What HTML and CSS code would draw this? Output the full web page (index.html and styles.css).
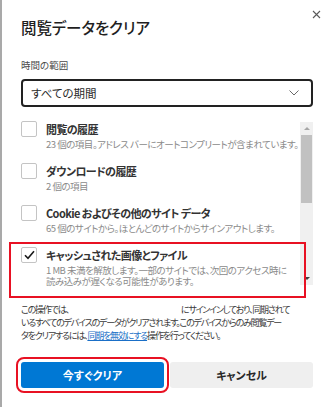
FILE: index.html
```html
<!DOCTYPE html>
<html lang="ja">
<head>
<meta charset="utf-8">
<title>閲覧データをクリア</title>
<link rel="stylesheet" href="styles.css">
</head>
<body>
<div class="frame">
  <div class="edge"></div>
  <div class="dialog">
    <div class="header">
      <h1 class="title">閲覧データをクリア</h1>
      <button class="close" aria-label="閉じる">
        <svg width="9" height="9" viewBox="0 0 9 9"><path d="M1 1L8 8M8 1L1 8" stroke="#5a5a5a" stroke-width="1.1" fill="none"/></svg>
      </button>
    </div>
    <div class="range-label">時間の範囲</div>
    <div class="select">
      <span class="select-value">すべての期間</span>
      <svg class="chevron" width="10" height="6" viewBox="0 0 10 6"><path d="M0.5 0.5L5 5L9.5 0.5" stroke="#6a6a6a" stroke-width="1" fill="none"/></svg>
    </div>
    <div class="list">
      <div class="items">
        <div class="item">
          <span class="cb"></span>
          <div class="text">
            <div class="label">閲覧の履歴</div>
            <div class="desc">23 個の項目。アドレス バーにオートコンプリートが含まれています。</div>
          </div>
        </div>
        <div class="item">
          <span class="cb"></span>
          <div class="text">
            <div class="label">ダウンロードの履歴</div>
            <div class="desc">2 個の項目</div>
          </div>
        </div>
        <div class="item">
          <span class="cb"></span>
          <div class="text">
            <div class="label">Cookie およびその他のサイト データ</div>
            <div class="desc">65 個のサイトから。ほとんどのサイトからサインアウトします。</div>
          </div>
        </div>
        <div class="item highlighted">
          <span class="cb checked">
            <svg width="16" height="16" viewBox="0 0 16 16"><path d="M4 8.2L7 11.3L13 4.2" stroke="#1a1a1a" stroke-width="1.6" fill="none"/></svg>
          </span>
          <div class="text">
            <div class="label">キャッシュされた画像とファイル</div>
            <div class="desc">1 MB 未満を解放します。一部のサイトでは、次回のアクセス時に<br>読み込みが遅くなる可能性があります。</div>
          </div>
        </div>
      </div>
      <div class="scrollbar">
        <span class="arrow"><span class="tri-up"></span></span>
        <span class="thumb"></span>
        <span class="spacer"></span>
        <span class="arrow"><span class="tri-down"></span></span>
      </div>
    </div>
    <p class="note">この操作では、<span class="redacted"></span>にサインインしており、同期されて<br>いるすべてのデバイスのデータがクリアされます。このデバイスからのみ閲覧デー<br>タをクリアするには、<a class="link" href="#">同期を無効にする</a>操作を行ってください。</p>
    <div class="buttons">
      <button class="btn primary">今すぐクリア</button>
      <button class="btn secondary">キャンセル</button>
    </div>
  </div>
</div>
</body>
</html>
```

FILE: styles.css
```css
* {
  box-sizing: border-box;
}

html, body {
  margin: 0;
  padding: 0;
  background: #ffffff;
}

body {
  width: 332px;
  height: 407px;
  overflow: hidden;
  font-family: "Noto Sans CJK JP", "Noto Sans", sans-serif;
  font-feature-settings: "palt" 1;
  color: #262626;
}

.frame {
  display: flex;
  width: 332px;
  height: 407px;
}

.edge {
  width: 2px;
  background: #a9a9a9;
  flex: none;
}

.dialog {
  flex: 1;
  min-width: 0;
  padding: 0 19px;
  background: #ffffff;
}

.header {
  display: flex;
  justify-content: space-between;
  align-items: flex-start;
}

.title {
  margin: 16px 0 0;
  font-size: 15.5px;
  line-height: 22px;
  font-weight: 500;
  letter-spacing: -0.1px;
  color: #1f1f1f;
}

.close {
  margin: 10px -8px 0 0;
  padding: 0;
  width: 9px;
  height: 9px;
  border: 0;
  background: none;
  display: flex;
}

.range-label {
  margin-top: 21px;
  font-size: 9.5px;
  line-height: 13px;
  color: #4a4a4a;
}

.select {
  margin-top: 7px;
  height: 28px;
  border: 2px solid #222222;
  border-radius: 4px;
  padding: 0 12px 0 8px;
  display: flex;
  align-items: center;
  justify-content: space-between;
}

.select-value {
  font-size: 11.5px;
  line-height: 16px;
  color: #2a2a2a;
}

.list {
  margin-top: 14px;
  display: flex;
}

.items {
  flex: 1;
  min-width: 0;
}

.item {
  display: flex;
  gap: 9px;
  margin-bottom: 13px;
  position: relative;
}

.item:last-child {
  margin-bottom: 0;
}

.cb {
  flex: none;
  width: 16px;
  height: 16px;
  border: 1px solid #c4c4c4;
  border-radius: 2px;
  background: #ffffff;
  display: flex;
  align-items: center;
  justify-content: center;
}

.cb svg {
  display: block;
  margin: -1px;
}

.label {
  font-size: 11px;
  line-height: 16px;
  font-weight: 700;
  letter-spacing: -0.6px;
  color: #333333;
  white-space: nowrap;
}

.desc {
  margin-top: 2px;
  font-size: 9.5px;
  line-height: 11px;
  letter-spacing: -0.5px;
  color: #8a8a8a;
  white-space: nowrap;
}

.highlighted::after {
  content: "";
  position: absolute;
  left: -12px;
  right: -6px;
  top: -5px;
  bottom: -11px;
  border: 2px solid #e81123;
  pointer-events: none;
}

.scrollbar {
  flex: none;
  width: 13px;
  height: 163px;
  margin-top: 1px;
  background: #f0f0f0;
  display: flex;
  flex-direction: column;
  align-items: center;
}

.arrow {
  height: 13px;
  width: 13px;
  display: flex;
  align-items: center;
  justify-content: center;
}

.tri-up {
  width: 0;
  height: 0;
  border-left: 3px solid transparent;
  border-right: 3px solid transparent;
  border-bottom: 3px solid #a6a6a6;
}

.tri-down {
  width: 0;
  height: 0;
  border-left: 3px solid transparent;
  border-right: 3px solid transparent;
  border-top: 3px solid #404040;
}

.thumb {
  width: 11px;
  height: 68px;
  background: #c1c1c1;
}

.spacer {
  flex: 1;
}

.note {
  margin: 16px 0 0;
  font-size: 9px;
  line-height: 13px;
  letter-spacing: -1.2px;
  color: #3a3a3a;
  white-space: nowrap;
}

.redacted {
  display: inline-block;
  width: 112px;
}

.link {
  color: #1a6fc7;
  text-decoration: underline;
}

.buttons {
  margin-top: 20px;
  display: flex;
  gap: 6px;
}

.btn {
  flex: 1;
  height: 26px;
  border: 0;
  border-radius: 3px;
  font-family: inherit;
  font-feature-settings: "palt" 1;
  font-size: 11px;
  font-weight: 700;
  padding: 0;
}

.primary {
  background: #0078d4;
  color: #ffffff;
  outline: 2px solid #e81123;
  outline-offset: 3px;
}

.secondary {
  background: #efefef;
  color: #262626;
}
```
